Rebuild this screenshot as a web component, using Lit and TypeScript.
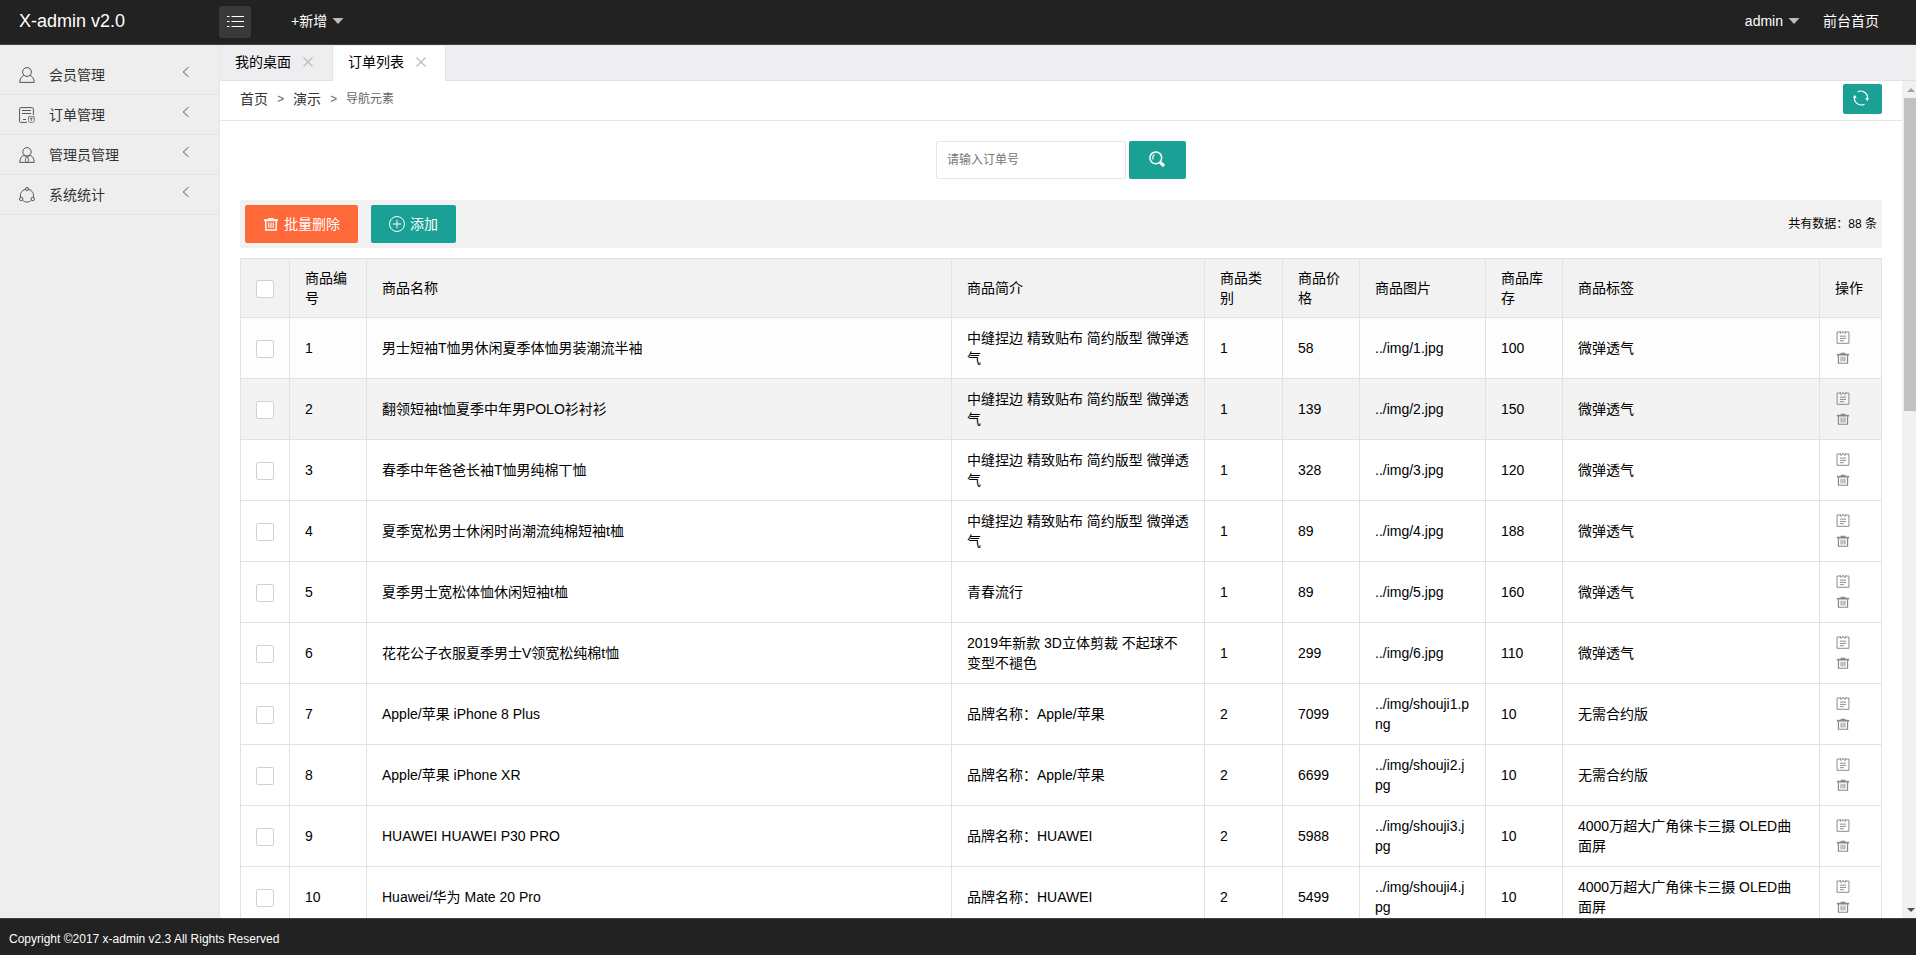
import { LitElement, html, css, svg, TemplateResult } from "lit";
import { customElement, property, state } from "lit/decorators.js";
import { classMap } from "lit/directives/class-map.js";

type IconName =
  | "menu" | "user" | "order" | "manager" | "stats" | "left" | "close"
  | "refresh" | "search" | "trash" | "add" | "edit" | "caret";

const ICONS: Record<IconName, TemplateResult> = {
  menu: svg`<path d="M4.500 2.500H17M4.500 7.500H17M4.500 12.500H17"/><path d="M0 2.500H2.500M0 7.500H2.500M0 12.500H2.500"/>`,
  user: svg`<circle cx="8" cy="5" r="4.400"/><path d="M4.800 8.300C2.500 9.600 .8 11.800 .7 15.400H15.300C15.200 11.800 13.500 9.600 11.200 8.300"/>`,
  order: svg`<path d="M8 15.400H2C1 15.400 .6 15 .6 14V2C.6 1 1 .6 2 .6H13C14 .6 14.400 1 14.400 2V8M3 3.500H12M3 6.500H12M4 12.500H7"/><path d="M9.500 9.700H15.200V13.500C15.200 15 14 15.500 12.300 15.500C10.600 15.500 9.500 15 9.500 13.500ZM11 11.500H13.700M12.300 11.500V14" stroke-width=".8"/>`,
  manager: svg`<circle cx="8" cy="4.800" r="4.200"/><path d="M5 8C2.500 9.300 .8 11.600 .7 15.400H15.300C15.200 11.600 13.500 9.300 11 8"/><path d="M5 8L7 10.200M11 8L9 10.200M7 9.800H9V11L9.800 14L8 15.400L6.200 14L7 11Z" stroke-width=".8"/>`,
  stats: svg`<circle cx="8" cy="2" r="1.500"/><circle cx="2.200" cy="12" r="1.700"/><circle cx="13.800" cy="12" r="1.700"/><path d="M6.400 2.300C2.500 3.300 .8 7 1.600 10.300M9.600 2.300C13.500 3.300 15.200 7 14.400 10.300M3.700 13.200C6 15.700 10 15.700 12.300 13.200"/>`,
  left: svg`<path d="M10.500 3.200L5.200 8L10.500 12.800"/>`,
  close: svg`<path d="M3.500 3.500L12.500 12.500M12.500 3.500L3.500 12.500" stroke-width="1.200"/>`,
  refresh: svg`<path d="M4.500 1.800C8.500 -.2 13.600 2 14.500 6.500V9M11.500 14.200C7.500 16.200 2.400 14 1.500 9.500V7" stroke-width="1.200"/><path d="M12.300 8H16L14.300 11.200ZM0 8H3.700L1.700 4.800Z" fill="currentColor" stroke="none"/>`,
  search: svg`<circle cx="6.800" cy="6.800" r="5.900" stroke-width="1.500"/><path d="M5.800 3.700C3.800 4.300 3.200 6.500 4.200 8.500" stroke-width="1.200"/><path d="M11.300 11.300L15 15" stroke-width="3.200"/>`,
  trash: svg`<path d="M5.300 2H10.700V3.500H5.300Z" fill="currentColor" stroke="none"/><path d="M1 4.200H15" stroke-width="2"/><path d="M2.800 5V14H13.200V5" stroke-width="1.400"/><path d="M5.800 6.500V12M8 6.500V12M10.200 6.500V12" stroke-width="1.100"/>`,
  add: svg`<circle cx="8" cy="8" r="7.500"/><path d="M8 3.800V12.200M3.800 8H12.200"/>`,
  edit: svg`<path d="M4.500 2.300H1.200V15.200H14.800V2.300H11.500" stroke-width="1.100"/><path d="M5 1.200V3.600H6.600L8 1.300L9.400 3.600H11V1.200M4.500 7H11.500M4.500 9.600H11.500M4.500 12.200H9" stroke-width="1.100"/>`,
  caret: svg`<path d="M2.500 5H13.500L8 11Z" fill="currentColor" stroke="none"/>`,
};

const icon = (name: IconName) => html`
  <svg class="icon ${name}" viewBox="0 0 ${name === "menu" ? 17 : 16} 16" aria-hidden="true">${ICONS[name]}</svg>
`;

const shared = css`
  * { box-sizing: border-box; }
  a { color: inherit; text-decoration: none; }
  button { font: inherit; color: inherit; border: 0; padding: 0; background: none; cursor: pointer; }
  .icon { width: 16px; height: 16px; flex: none; display: block; fill: none; stroke: currentColor; stroke-width: 1; }
`;

interface Product {
  id: number; name: string; intro: string; kind: number;
  price: number; image: string; stock: number; tag: string;
}

const SHIRT = "中缝捏边 精致贴布 简约版型 微弹透气";
const CAMERA = "4000万超大广角徕卡三摄 OLED曲面屏";

const PRODUCTS: Product[] = [
  { id: 1, name: "男士短袖T恤男休闲夏季体恤男装潮流半袖", intro: SHIRT, kind: 1, price: 58, image: "../img/1.jpg", stock: 100, tag: "微弹透气" },
  { id: 2, name: "翻领短袖t恤夏季中年男POLO衫衬衫", intro: SHIRT, kind: 1, price: 139, image: "../img/2.jpg", stock: 150, tag: "微弹透气" },
  { id: 3, name: "春季中年爸爸长袖T恤男纯棉丅恤", intro: SHIRT, kind: 1, price: 328, image: "../img/3.jpg", stock: 120, tag: "微弹透气" },
  { id: 4, name: "夏季宽松男士休闲时尚潮流纯棉短袖t桖", intro: SHIRT, kind: 1, price: 89, image: "../img/4.jpg", stock: 188, tag: "微弹透气" },
  { id: 5, name: "夏季男士宽松体恤休闲短袖t桖", intro: "青春流行", kind: 1, price: 89, image: "../img/5.jpg", stock: 160, tag: "微弹透气" },
  { id: 6, name: "花花公子衣服夏季男士V领宽松纯棉t恤", intro: "2019年新款 3D立体剪裁 不起球不变型不褪色", kind: 1, price: 299, image: "../img/6.jpg", stock: 110, tag: "微弹透气" },
  { id: 7, name: "Apple/苹果 iPhone 8 Plus", intro: "品牌名称：Apple/苹果", kind: 2, price: 7099, image: "../img/shouji1.png", stock: 10, tag: "无需合约版" },
  { id: 8, name: "Apple/苹果 iPhone XR", intro: "品牌名称：Apple/苹果", kind: 2, price: 6699, image: "../img/shouji2.jpg", stock: 10, tag: "无需合约版" },
  { id: 9, name: "HUAWEI HUAWEI P30 PRO", intro: "品牌名称：HUAWEI", kind: 2, price: 5988, image: "../img/shouji3.jpg", stock: 10, tag: CAMERA },
  { id: 10, name: "Huawei/华为 Mate 20 Pro", intro: "品牌名称：HUAWEI", kind: 2, price: 5499, image: "../img/shouji4.jpg", stock: 10, tag: CAMERA },
];

@customElement("side-menu")
export class SideMenu extends LitElement {
  static styles = [shared, css`
    :host { display: block; flex: none; width: 220px; padding-top: 10px; background: #eee; border-right: 1px solid #e5e5e5; }
    .item { display: flex; align-items: center; height: 40px; padding: 0 25px 0 19px; border-bottom: 1px solid #e5e5e5; color: #333; }
    .label { flex: 1; margin-left: 14px; }
    .icon { color: #555; }
    .left { margin-bottom: 6px; }
  `];

  private items: { icon: IconName; label: string }[] = [
    { icon: "user", label: "会员管理" },
    { icon: "order", label: "订单管理" },
    { icon: "manager", label: "管理员管理" },
    { icon: "stats", label: "系统统计" },
  ];

  render() {
    return html`<nav>
      ${this.items.map((i) => html`
        <a class="item" href="#">${icon(i.icon)}<span class="label">${i.label}</span>${icon("left")}</a>
      `)}
    </nav>`;
  }
}

@customElement("product-table")
export class ProductTable extends LitElement {
  @property({ attribute: false }) rows: Product[] = [];
  @state() private selected = new Set<number>();

  static styles = [shared, css`
    :host { display: block; }
    table { width: 100%; table-layout: fixed; border-collapse: collapse; color: #000; }
    th, td { padding: 9px 15px; border: 1px solid #e2e2e2; font-weight: 400; line-height: 20px; text-align: left; word-break: break-all; }
    thead { background: #f2f2f2; }
    tr.fading { background: #fdfdfd; }
    tr.hovered { background: #f3f3f3; }
    .c-check { width: 49px; }
    .c-small { width: 77px; }
    .c-kind { width: 78px; }
    .c-intro { width: 253px; }
    .c-image { width: 126px; }
    .c-tag { width: 257px; }
    .c-action { width: 62px; }
    .check { appearance: none; display: block; width: 18px; height: 18px; margin: 2px 0 0; border: 1px solid #d2d2d2; border-radius: 2px; background: #fff; }
    .check:checked { border-color: #5fb878; background: #5fb878; }
    .action { display: flex; align-items: center; height: 21px; padding: 0 1px 2px; color: #888; }
    .action .icon { width: 14px; height: 14px; }
  `];

  private toggle(id: number) {
    const next = new Set(this.selected);
    next.has(id) ? next.delete(id) : next.add(id);
    this.selected = next;
  }

  private toggleAll(e: Event) {
    const on = (e.target as HTMLInputElement).checked;
    this.selected = new Set(on ? this.rows.map((r) => r.id) : []);
  }

  render() {
    return html`<table>
      <colgroup>
        <col class="c-check"><col class="c-small"><col><col class="c-intro"><col class="c-kind">
        <col class="c-small"><col class="c-image"><col class="c-small"><col class="c-tag"><col class="c-action">
      </colgroup>
      <thead><tr>
        <th><input class="check" type="checkbox" aria-label="全选" @change=${this.toggleAll}></th>
        ${["商品编号", "商品名称", "商品简介", "商品类别", "商品价格", "商品图片", "商品库存", "商品标签", "操作"]
          .map((h) => html`<th scope="col">${h}</th>`)}
      </tr></thead>
      <tbody>
        ${this.rows.map((r) => html`
          <tr class=${classMap({ fading: r.id === 1, hovered: r.id === 2 })}>
            <td><input class="check" type="checkbox" aria-label=${r.name}
              .checked=${this.selected.has(r.id)} @change=${() => this.toggle(r.id)}></td>
            <td>${r.id}</td>
            <td>${r.name}</td>
            <td>${r.intro}</td>
            <td>${r.kind}</td>
            <td>${r.price}</td>
            <td>${r.image}</td>
            <td>${r.stock}</td>
            <td>${r.tag}</td>
            <td>
              <button class="action" aria-label="编辑">${icon("edit")}</button>
              <button class="action" aria-label="删除">${icon("trash")}</button>
            </td>
          </tr>`)}
      </tbody>
    </table>`;
  }
}

@customElement("app-root")
export class AppRoot extends LitElement {
  static styles = [shared, css`
    :host {
      display: flex; flex-direction: column; height: 100vh; overflow: hidden; background: #fff; color: #000;
      font: 14px/20px "Liberation Sans", "Noto Sans CJK SC", sans-serif;
    }
    .top { display: flex; align-items: center; flex: none; height: 45px; padding: 0 37px 0 19px; background: #222; border-bottom: 1px solid #404040; color: #fff; }
    .logo { width: 200px; padding-bottom: 2px; font-size: 18px; }
    .toggle { display: flex; align-items: center; justify-content: center; width: 32px; height: 32px; border-radius: 3px; background: #393939; }
    .toggle .icon { width: 17px; }
    .drop { display: flex; align-items: center; gap: 3px; padding-bottom: 2px; }
    .drop .icon { color: #bcbcbc; }
    .create { margin-left: 40px; }
    .account { display: flex; gap: 21px; margin-left: auto; }
    .middle { display: flex; flex: 1; min-height: 0; }
    .work { display: flex; flex-direction: column; flex: 1; min-width: 0; }
    .tabs { display: flex; flex: none; height: 36px; padding-top: 1px; background: #eeeef0; box-shadow: inset 0 -1px #e2e2e2; }
    .tab { display: flex; align-items: center; padding: 0 15px 4px; border-right: 1px solid #e2e2e2; }
    .tab.active { background: #fff; border-radius: 2px 2px 0 0; }
    .tab-close { margin: 0 1px 0 9px; color: #bbb; }
    .view { display: flex; flex: 1; min-height: 0; }
    .page { flex: 1; min-width: 0; overflow: hidden; }
    .crumbs { display: flex; align-items: center; height: 40px; padding: 0 20px 3px; border-bottom: 1px solid #e5e5e5; color: #333; }
    .path { display: flex; align-items: center; flex: 1; gap: 10px; }
    .sep, .here { font-size: 12px; color: #666; }
    .sep { display: flex; justify-content: center; width: 5px; padding-top: 1px; font-family: "Liberation Mono", monospace; }
    .btn { display: inline-flex; align-items: center; justify-content: center; gap: 5px; height: 38px; padding: 0 18px; border-radius: 2px; background: #1aa094; color: #fff; }
    .btn.danger { background: #ff6838; }
    .btn.small { width: 39px; height: 30px; padding: 0 3px 2px 0; }
    .btn.find { width: 57px; padding: 0 2px 2px 0; }
    .body { padding: 20px; }
    .search { display: flex; justify-content: center; align-items: flex-end; gap: 3px; }
    .field { width: 190px; height: 38px; padding: 0 10px; border: 1px solid #e6e6e6; border-radius: 2px; outline: 0; font: inherit; font-size: 12px; }
    .field::placeholder { color: #757575; }
    .bar { display: flex; align-items: center; gap: 13px; margin: 21px 0 10px; padding: 5px; border-radius: 2px; background: #f2f2f2; }
    .total { margin-left: auto; font-size: 12px; }
    .rail { display: flex; flex-direction: column; flex: none; width: 14px; background: #f1f1f1; color: #505050; }
    .arrow { display: flex; align-items: center; justify-content: center; height: 17px; padding-left: 3px; }
    .arrow svg { width: 8px; height: 4px; fill: currentColor; }
    .arrow.idle { color: #a3a3a3; }
    .thumb-track { flex: 1; padding-left: 2px; }
    .thumb { height: 39%; background: #c1c1c1; }
    .foot { flex: none; height: 37px; padding: 10px 9px; background: #222; border-top: 1px solid #404040; color: #fff; font-size: 12px; }
  `];

  render() {
    return html`
      <header class="top">
        <a class="logo" href="#">X-admin v2.0</a>
        <button class="toggle" aria-label="菜单">${icon("menu")}</button>
        <button class="drop create" aria-haspopup="menu"><span>+新增</span>${icon("caret")}</button>
        <div class="account">
          <button class="drop" aria-haspopup="menu"><span>admin</span>${icon("caret")}</button>
          <a href="#">前台首页</a>
        </div>
      </header>
      <div class="middle">
        <side-menu></side-menu>
        <div class="work">
          <div class="tabs">
            ${["我的桌面", "订单列表"].map((t, i) => html`
              <div class=${classMap({ tab: true, active: i === 1 })}>
                <a href="#">${t}</a><button class="tab-close" aria-label="关闭">${icon("close")}</button>
              </div>`)}
          </div>
          <div class="view">
            <main class="page">
              <div class="crumbs">
                <nav class="path">
                  <a href="#">首页</a><span class="sep">&gt;</span>
                  <a href="#">演示</a><span class="sep">&gt;</span>
                  <span class="here">导航元素</span>
                </nav>
                <button class="btn small" aria-label="刷新">${icon("refresh")}</button>
              </div>
              <div class="body">
                <form class="search" @submit=${(e: Event) => e.preventDefault()}>
                  <input class="field" type="text" aria-label="订单号" placeholder="请输入订单号">
                  <button class="btn find" aria-label="搜索">${icon("search")}</button>
                </form>
                <div class="bar">
                  <button class="btn danger">${icon("trash")}<span>批量删除</span></button>
                  <button class="btn">${icon("add")}<span>添加</span></button>
                  <span class="total">共有数据：88 条</span>
                </div>
                <product-table .rows=${PRODUCTS}></product-table>
              </div>
            </main>
            <div class="rail" aria-hidden="true">
              <div class="arrow idle"><svg viewBox="0 0 8 4"><path d="M0 4H8L4 0Z"/></svg></div>
              <div class="thumb-track"><div class="thumb"></div></div>
              <div class="arrow"><svg viewBox="0 0 8 4"><path d="M0 0H8L4 4Z"/></svg></div>
            </div>
          </div>
        </div>
      </div>
      <footer class="foot">Copyright ©2017 x-admin v2.3 All Rights Reserved</footer>
    `;
  }
}
